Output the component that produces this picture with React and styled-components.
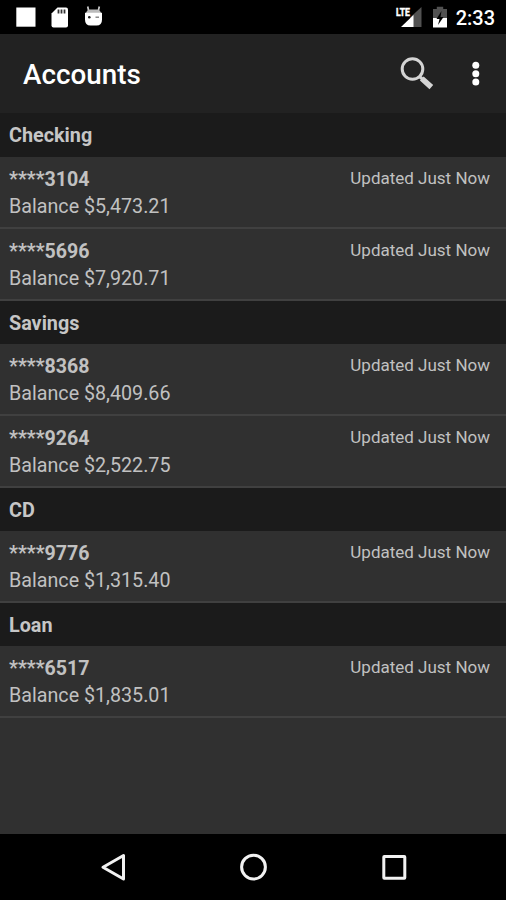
import React from "react";
import styled, { createGlobalStyle } from "styled-components";

const GlobalStyle = createGlobalStyle`
  * {
    box-sizing: border-box;
  }

  body {
    margin: 0;
    background: #000;
    font-family: Roboto, "Liberation Sans", sans-serif;
  }
`;

const Screen = styled.div`
  display: flex;
  flex-direction: column;
  width: 506px;
  height: 900px;
  overflow: hidden;
  background: #303030;
`;

const StatusBar = styled.div`
  display: flex;
  flex: none;
  justify-content: space-between;
  height: 34px;
  background: #000;
`;

const Clock = styled.span`
  margin-right: 11px;
  color: #fff;
  font-size: 20px;
  font-weight: 500;
  line-height: 37px;
`;

const StatusGroup = styled.div`
  display: flex;
`;

const Toolbar = styled.header`
  display: flex;
  flex: none;
  align-items: center;
  height: 79.4px;
  padding-left: 23px;
  background: #222;
`;

const Title = styled.h1`
  flex: 1;
  margin: 2px 0 0;
  color: #fff;
  font-size: 27.8px;
  font-weight: 500;
  line-height: 32px;
`;

const IconButton = styled.button`
  display: flex;
  padding: 0;
  border: 0;
  background: none;
`;

const AccountList = styled.main`
  flex: 1;
`;

const SectionTitle = styled.h2`
  height: 43.2px;
  margin: 0;
  padding-left: 9px;
  background: #1b1b1b;
  color: #c6c6c6;
  font-size: 19.8px;
  font-weight: 700;
  line-height: 46px;
`;

const AccountRow = styled.div`
  display: flex;
  justify-content: space-between;
  height: 72px;
  padding: 9px 16px 0 9px;
  border-bottom: 2px solid #404040;
  color: #c1c1c1;
`;

const AccountNumber = styled.div`
  font-size: 19.6px;
  font-weight: 700;
  line-height: 27px;
`;

const Balance = styled.div`
  font-size: 19.7px;
  line-height: 27px;
`;

const Updated = styled.div`
  font-size: 17px;
  line-height: 25px;
`;

const NavBar = styled.nav`
  display: flex;
  flex: none;
  height: 66.5px;
  background: #000;
`;

const groups = [
  {
    name: "Checking",
    accounts: [
      { number: "3104", balance: "$5,473.21" },
      { number: "5696", balance: "$7,920.71" },
    ],
  },
  {
    name: "Savings",
    accounts: [
      { number: "8368", balance: "$8,409.66" },
      { number: "9264", balance: "$2,522.75" },
    ],
  },
  { name: "CD", accounts: [{ number: "9776", balance: "$1,315.40" }] },
  { name: "Loan", accounts: [{ number: "6517", balance: "$1,835.01" }] },
];

const NotificationIcons = () => (
  <svg width="110" height="34" fill="#fff">
    <rect x="16.3" y="7.5" width="19.2" height="19.2" />
    <path d="M57.5 7.5H66q2 0 2 2v16q0 2-2 2H53.5q-2 0-2-2V13.5z" />
    <path d="M58.5 9.5v4M61.5 9.5v4M64.5 9.5v4" stroke="#333" strokeWidth="1.8" />
    <path d="M87.7 6.5l1 4.5M99.3 6.5l-1 4.5" stroke="#ccc" strokeWidth="1.7" />
    <path d="M86 13q1-3.500 4-3.500h7q3 0 4 3.500z" fill="#bbb" />
    <path d="M85 12.700h17v7q0 5.800-5.500 5.800h-6q-5.500 0-5.500-5.800z" />
    <circle cx="89.3" cy="17.2" r="1.3" fill="#222" />
    <path d="M95.5 17.2h3.5" stroke="#777" strokeWidth="1.3" />
  </svg>
);

const SystemIcons = () => (
  <svg width="61" height="34">
    <path d="M15 17.5L26.500 7v20H17z" fill="#515151" />
    <path d="M6 27L18.500 15v12z" fill="#fff" />
    <text
      x="1"
      y="15.500"
      fill="#fff"
      stroke="#fff"
      strokeWidth=".5"
      fontSize="11"
      fontWeight="700"
      textLength="14"
      lengthAdjust="spacingAndGlyphs"
    >
      LTE
    </text>
    <path d="M38 9h3.800V6.800h6.400V9H52v9H38z" fill="#515151" />
    <path d="M38 18h14v9.500H38z" fill="#fff" />
    <path d="M46.500 11l-5 8h3l-1.500 6 5.500-8h-3z" fill="#000" />
  </svg>
);

const SearchIcon = () => (
  <svg width="60" height="50" fill="none" stroke="#d4d4d4">
    <circle cx="17.5" cy="20" r="10.3" strokeWidth="3" />
    <path d="M24.5 27.5l4 3.5" strokeWidth="3" />
    <path
      d="M28.800 31.300l5.500 5"
      strokeWidth="5.500"
      strokeLinecap="square"
    />
  </svg>
);

const MoreIcon = () => (
  <svg width="51" height="50" fill="#fff">
    <circle cx="20.8" cy="16.2" r="3.5" />
    <circle cx="20.8" cy="24.7" r="3.5" />
    <circle cx="20.8" cy="33.1" r="3.5" />
  </svg>
);

const NavIcons = () => (
  <svg width="506" height="66" fill="none" stroke="#f2f2f2" strokeWidth="3">
    <path d="M123.5 21.5v23.5L103 33.3z" strokeLinejoin="round" />
    <circle cx="253.5" cy="33.1" r="11.9" />
    <rect x="383.8" y="22.5" width="21" height="21.7" rx=".5" />
  </svg>
);

const App = () => {
  const renderedGroups = groups.map((group) => (
    <section key={group.name}>
      <SectionTitle>{group.name}</SectionTitle>
      {group.accounts.map((account) => (
        <AccountRow key={account.number}>
          <div>
            <AccountNumber>****{account.number}</AccountNumber>
            <Balance>Balance {account.balance}</Balance>
          </div>
          <Updated>Updated Just Now</Updated>
        </AccountRow>
      ))}
    </section>
  ));

  return (
    <>
      <GlobalStyle />
      <Screen>
        <StatusBar>
          <NotificationIcons />
          <StatusGroup>
            <SystemIcons />
            <Clock>2:33</Clock>
          </StatusGroup>
        </StatusBar>
        <Toolbar>
          <Title>Accounts</Title>
          <IconButton aria-label="Search">
            <SearchIcon />
          </IconButton>
          <IconButton aria-label="More options">
            <MoreIcon />
          </IconButton>
        </Toolbar>
        <AccountList>{renderedGroups}</AccountList>
        <NavBar>
          <NavIcons />
        </NavBar>
      </Screen>
    </>
  );
};

export default App;
